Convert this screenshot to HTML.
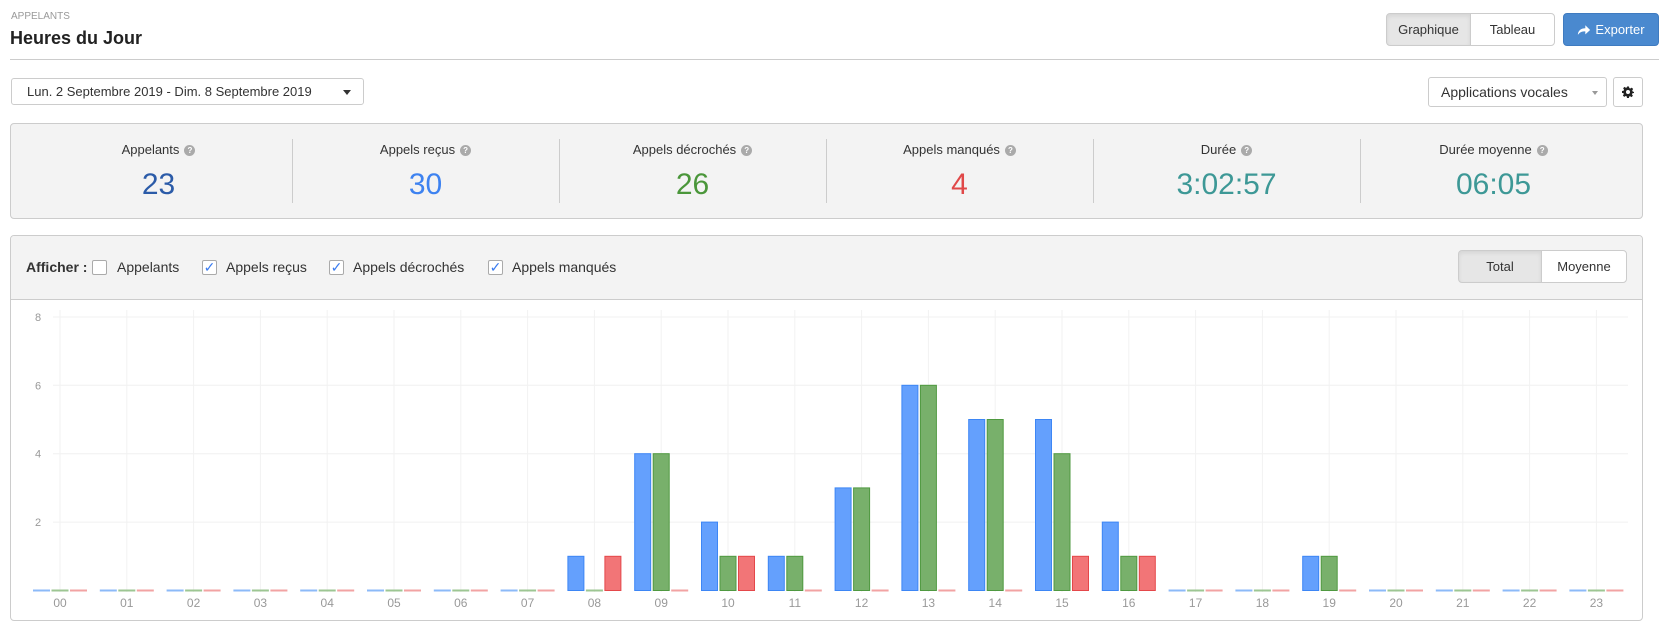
<!DOCTYPE html>
<html><head><meta charset="utf-8"><style>
*{box-sizing:border-box;margin:0;padding:0}
body{width:1669px;height:633px;background:#fff;font-family:"Liberation Sans",Arial,sans-serif;color:#333;position:relative;overflow:hidden}
.a{position:absolute}
.btn{position:absolute;border:1px solid #ccc;background:#fff;font-size:13px;display:flex;align-items:center;justify-content:center;color:#333}
.panel{position:absolute;background:#f3f3f3;border:1px solid #ccc;border-radius:4px}
.lbl{position:absolute;width:267px;text-align:center;font-size:13px;top:142px}
.val{position:absolute;width:267px;text-align:center;font-size:30px;top:168px}
.q{display:inline-block;width:11px;height:11px;border-radius:50%;background:#aaa;color:#fff;font-size:8px;line-height:11px;text-align:center;font-weight:bold;vertical-align:1px;margin-left:5px}
.div{position:absolute;top:139px;height:64px;width:1px;background:#ccc}
.cb{position:absolute;top:260px;width:15px;height:15px;border:1px solid #aaa;border-radius:2px;background:#fff;font-size:14px;color:#3b7cf0;line-height:13px;text-align:center}
.ct{position:absolute;top:259px;font-size:14px}
</style></head><body>
<div class="a" style="left:11px;top:11px;font-size:10px;color:#999">APPELANTS</div>
<div class="a" style="left:10px;top:28px;font-size:18px;font-weight:bold;color:#222">Heures du Jour</div>
<div class="btn" style="left:1386px;top:13px;width:85px;height:33px;background:#e6e6e6;border-radius:4px 0 0 4px;box-shadow:inset 0 2px 4px rgba(0,0,0,.08)">Graphique</div>
<div class="btn" style="left:1470px;top:13px;width:85px;height:33px;border-radius:0 4px 4px 0">Tableau</div>
<div class="btn" style="left:1563px;top:13px;width:96px;height:33px;background:#4a89cf;border-color:#3f7bc0;color:#fff;border-radius:4px"><svg width="14" height="12" viewBox="0 0 16 13" style="margin-right:4px"><path d="M1 12C1 7 5 4.5 9.5 4.5V1L15 6.5 9.5 11.5V8C5.5 8 3 9 1 12Z" fill="#fff"/></svg>Exporter</div>
<div class="a" style="left:10px;top:59px;width:1649px;height:1px;background:#ccc"></div>

<div class="btn" style="left:11px;top:78px;width:353px;height:27px;border-radius:3px;justify-content:flex-start;padding-left:15px">Lun. 2 Septembre 2019 - Dim. 8 Septembre 2019<span style="position:absolute;right:12px;top:11px;border-left:4px solid transparent;border-right:4px solid transparent;border-top:5px solid #333"></span></div>
<div class="btn" style="left:1428px;top:77px;width:179px;height:30px;border-radius:3px;justify-content:flex-start;padding-left:12px;font-size:14px">Applications vocales<span style="position:absolute;right:8px;top:13px;border-left:3px solid transparent;border-right:3px solid transparent;border-top:4px solid #999"></span></div>
<div class="btn" style="left:1613px;top:77px;width:30px;height:30px;border-radius:3px"><svg width="12" height="12" viewBox="0 0 24 24"><path fill="#222" d="M10 1h4l.6 3.2 2.2.9 2.7-1.9 2.8 2.8-1.9 2.7.9 2.2L24 12v0l0 2-3.2.6-.9 2.2 1.9 2.7-2.8 2.8-2.7-1.9-2.2.9L14 24h-4l-.6-3.2-2.2-.9-2.7 1.9-2.8-2.8 1.9-2.7-.9-2.2L0 14v-4l3.2-.6.9-2.2-1.9-2.7 2.8-2.8 2.7 1.9 2.2-.9zM12 8a4 4 0 100 8 4 4 0 000-8z"/></svg></div>

<div class="panel" style="left:10px;top:123px;width:1633px;height:96px"></div>
<div class="lbl" style="left:25px">Appelants<span class="q">?</span></div>
<div class="lbl" style="left:292px">Appels reçus<span class="q">?</span></div>
<div class="lbl" style="left:559px">Appels décrochés<span class="q">?</span></div>
<div class="lbl" style="left:826px">Appels manqués<span class="q">?</span></div>
<div class="lbl" style="left:1093px">Durée<span class="q">?</span></div>
<div class="lbl" style="left:1360px">Durée moyenne<span class="q">?</span></div>
<div class="val" style="left:25px;color:#2b5ba8">23</div>
<div class="val" style="left:292px;color:#3d82f0">30</div>
<div class="val" style="left:559px;color:#4a963a">26</div>
<div class="val" style="left:826px;color:#e04848">4</div>
<div class="val" style="left:1093px;color:#3d9896">3:02:57</div>
<div class="val" style="left:1360px;color:#3d9896">06:05</div>
<div class="div" style="left:292px"></div><div class="div" style="left:559px"></div><div class="div" style="left:826px"></div><div class="div" style="left:1093px"></div><div class="div" style="left:1360px"></div>

<div class="a" style="left:10px;top:235px;width:1633px;height:386px;border:1px solid #ccc;border-radius:4px;background:#fff;overflow:hidden"><div style="height:64px;background:#f3f3f3;border-bottom:1px solid #ccc"></div></div>
<div class="a" style="left:26px;top:259px;font-size:14px;font-weight:bold">Afficher :</div>
<div class="cb" style="left:92px"></div><div class="ct" style="left:117px">Appelants</div>
<div class="cb" style="left:202px">✓</div><div class="ct" style="left:226px">Appels reçus</div>
<div class="cb" style="left:329px">✓</div><div class="ct" style="left:353px">Appels décrochés</div>
<div class="cb" style="left:488px">✓</div><div class="ct" style="left:512px">Appels manqués</div>
<div class="btn" style="left:1458px;top:250px;width:84px;height:33px;background:#e6e6e6;border-radius:4px 0 0 4px;box-shadow:inset 0 2px 4px rgba(0,0,0,.08)">Total</div>
<div class="btn" style="left:1541px;top:250px;width:86px;height:33px;border-radius:0 4px 4px 0">Moyenne</div>

<svg class="a" id="ch" style="left:0;top:0" width="1669" height="633" font-family="Liberation Sans, Arial, sans-serif"></svg>
<script>
var s='',h,c;
var ys={8:317,6:385.3,4:453.7,2:522.1};
for(var k in ys){s+='<line x1="53" x2="1628" y1="'+ys[k]+'" y2="'+ys[k]+'" stroke="#f0f0f0"/>';s+='<text x="38" y="'+(ys[k]+4)+'" font-size="11" fill="#999" text-anchor="middle">'+k+'</text>';}
for(h=0;h<24;h++){c=60+66.8*h;s+='<line x1="'+c+'" x2="'+c+'" y1="310" y2="592" stroke="#f2f2f2"/>';}
var d={8:[1,0,1],9:[4,4,0],10:[2,1,1],11:[1,1,0],12:[3,3,0],13:[6,6,0],14:[5,5,0],15:[5,4,1],16:[2,1,1],19:[1,1,0]};
var fill=['#64a0fd','#78b06b','#f27577'],st=['#3d86f5','#4f9940','#e4474a'],zl=['#8cbaf8','#9dc693','#f2a3a3'],off=[-27,-8.5,10];
for(h=0;h<24;h++){c=60+66.8*h;var v=d[h]||[0,0,0];
for(var i=0;i<3;i++){var x=c+off[i];
if(v[i]==0){s+='<rect x="'+x+'" y="589.5" width="17" height="2" fill="'+zl[i]+'"/>';}
else{var hh=v[i]*34.2;s+='<rect x="'+(x+.5)+'" y="'+(590.5-hh)+'" width="16" height="'+hh+'" fill="'+fill[i]+'" stroke="'+st[i]+'" stroke-width="1"/>';}}
s+='<text x="'+c+'" y="607" font-size="12" fill="#999" text-anchor="middle">'+(h<10?'0'+h:h)+'</text>';}
document.getElementById('ch').innerHTML=s;
</script>
</body></html>
